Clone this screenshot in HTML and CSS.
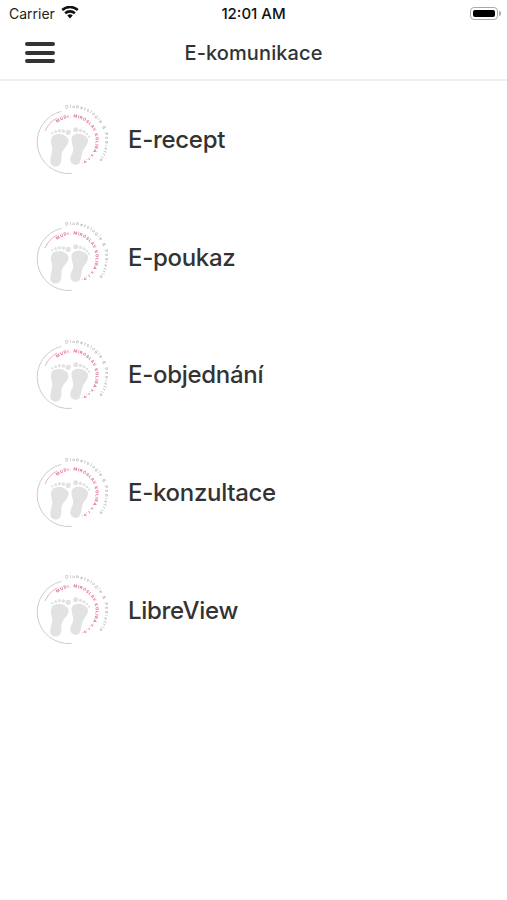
FILE: index.html
```html
<!DOCTYPE html>
<html lang="cs">
  <head>
    <meta charset="UTF-8" />
    <meta name="viewport" content="width=device-width, initial-scale=1.0" />
    <title>E-komunikace</title>
    <link rel="stylesheet" href="styles.css">
  </head>

  <body>
    <svg class="defs" width="0" height="0">
      <defs>
        <path id="ring-outer" d="M 29.6 4.7 A 33 33 0 1 1 30.8 69.5" />
        <path id="ring-inner" d="M 21 19 A 23.5 23.5 0 1 1 28 59" />
      </defs>
      <symbol id="logo-base" viewBox="0 0 72 72">
        <path class="logo-arc" d="M 25.4 7.4 A 31.5 31.5 0 0 0 35.7 69.4" />
        <path class="logo-arc-pink" d="M 9 27 A 27 27 0 0 1 21 14" />
        <g transform="translate(23 43) rotate(10)">
          <path class="logo-foot" d="M-8-10C-4-14 5-14 8-9 10-4 5 0 4 5 3 9 6 12 4 17 2 21-5 21-6 16-7 10-5 6-7 1-9-3-10-7-8-10z" />
          <circle class="logo-foot" cx="6.5" cy="-16" r="2.6" />
          <circle class="logo-foot" cx="1.5" cy="-16.5" r="1.8" />
          <circle class="logo-foot" cx="-2.5" cy="-16" r="1.6" />
          <circle class="logo-foot" cx="-6" cy="-14.5" r="1.4" />
          <circle class="logo-foot" cx="-9" cy="-12.5" r="1.2" />
        </g>
        <g transform="translate(42 42) rotate(14) scale(-0.95 0.95)">
          <path class="logo-foot" d="M-8-10C-4-14 5-14 8-9 10-4 5 0 4 5 3 9 6 12 4 17 2 21-5 21-6 16-7 10-5 6-7 1-9-3-10-7-8-10z" />
          <circle class="logo-foot" cx="6.5" cy="-16" r="2.6" />
          <circle class="logo-foot" cx="1.5" cy="-16.5" r="1.8" />
          <circle class="logo-foot" cx="-2.5" cy="-16" r="1.6" />
          <circle class="logo-foot" cx="-6" cy="-14.5" r="1.4" />
          <circle class="logo-foot" cx="-9" cy="-12.5" r="1.2" />
        </g>
      </symbol>
    </svg>

    <div class="statusbar">
      <div class="status-left">
        <span>Carrier</span>
        <svg class="wifi" viewBox="0 0 20 15" width="18" height="13">
          <path d="M10 14.5 6.8 11a4.6 4.6 0 0 1 6.4 0z" />
          <path d="M5.4 9.5 3.4 7.3a9.6 9.6 0 0 1 13.2 0l-2 2.2a6.7 6.7 0 0 0-9.2 0z" />
          <path d="M2 5.8 0 3.6a14.6 14.6 0 0 1 20 0l-2 2.2a11.7 11.7 0 0 0-16 0z" />
        </svg>
      </div>
      <span class="status-time">12:01 AM</span>
      <div class="battery">
        <div class="battery-body"><div class="battery-level"></div></div>
        <div class="battery-tip"></div>
      </div>
    </div>

    <header class="navbar">
      <button class="menu-btn" aria-label="Menu">
        <span></span>
        <span></span>
        <span></span>
      </button>
      <h1>E-komunikace</h1>
    </header>

    <ul class="list">
      <li class="item">
        <svg class="logo" viewBox="0 0 72 72">
          <use href="#logo-base" width="72" height="72" />
          <text class="logo-outer"><textPath href="#ring-outer">Diabetologie &amp; Podiatrie</textPath></text>
          <text class="logo-inner"><textPath href="#ring-inner">MUDr. MIROSLAV KOLIBA s.r.o.</textPath></text>
        </svg>
        <span>E-recept</span>
      </li>
      <li class="item">
        <svg class="logo" viewBox="0 0 72 72">
          <use href="#logo-base" width="72" height="72" />
          <text class="logo-outer"><textPath href="#ring-outer">Diabetologie &amp; Podiatrie</textPath></text>
          <text class="logo-inner"><textPath href="#ring-inner">MUDr. MIROSLAV KOLIBA s.r.o.</textPath></text>
        </svg>
        <span>E-poukaz</span>
      </li>
      <li class="item">
        <svg class="logo" viewBox="0 0 72 72">
          <use href="#logo-base" width="72" height="72" />
          <text class="logo-outer"><textPath href="#ring-outer">Diabetologie &amp; Podiatrie</textPath></text>
          <text class="logo-inner"><textPath href="#ring-inner">MUDr. MIROSLAV KOLIBA s.r.o.</textPath></text>
        </svg>
        <span>E-objednání</span>
      </li>
      <li class="item">
        <svg class="logo" viewBox="0 0 72 72">
          <use href="#logo-base" width="72" height="72" />
          <text class="logo-outer"><textPath href="#ring-outer">Diabetologie &amp; Podiatrie</textPath></text>
          <text class="logo-inner"><textPath href="#ring-inner">MUDr. MIROSLAV KOLIBA s.r.o.</textPath></text>
        </svg>
        <span>E-konzultace</span>
      </li>
      <li class="item">
        <svg class="logo" viewBox="0 0 72 72">
          <use href="#logo-base" width="72" height="72" />
          <text class="logo-outer"><textPath href="#ring-outer">Diabetologie &amp; Podiatrie</textPath></text>
          <text class="logo-inner"><textPath href="#ring-inner">MUDr. MIROSLAV KOLIBA s.r.o.</textPath></text>
        </svg>
        <span>LibreView</span>
      </li>
    </ul>
  </body>
</html>
```

FILE: styles.css
```css
* {
  margin: 0;
  padding: 0;
  box-sizing: border-box;
}

body {
  width: 507px;
  height: 900px;
  overflow: hidden;
  background-color: #fff;
  color: #333;
  font-family: Inter, "Liberation Sans", sans-serif;
}

.defs {
  display: block;
  height: 0;
}

.statusbar {
  height: 27px;
  display: grid;
  grid-template-columns: 1fr auto 1fr;
  align-items: center;
  padding: 0 9px;
  font-size: 14px;
  color: #222;
}

.status-left {
  display: flex;
  align-items: center;
  gap: 6px;
}

.wifi {
  fill: #111;
  margin-top: -3px;
}

.status-time {
  font-size: 15px;
  font-weight: 500;
  color: #111;
}

.battery {
  justify-self: end;
  margin-right: -3px;
  display: flex;
  align-items: center;
  gap: 1px;
}

.battery-body {
  width: 28px;
  height: 13px;
  padding: 2px;
  border: 1px solid #aaa;
  border-radius: 4px;
}

.battery-level {
  height: 100%;
  background-color: #000;
  border-radius: 2px;
}

.battery-tip {
  width: 2px;
  height: 5px;
  background-color: #aaa;
  border-radius: 0 2px 2px 0;
}

.navbar {
  position: relative;
  height: 54px;
  display: flex;
  align-items: center;
  justify-content: center;
  border-bottom: 2px solid #efefef;
}

.navbar h1 {
  font-size: 20px;
  font-weight: 500;
  letter-spacing: 0.1px;
  color: #333;
}

.menu-btn {
  position: absolute;
  left: 25px;
  top: 15px;
  width: 30px;
  display: flex;
  flex-direction: column;
  gap: 4.5px;
  border: none;
  background: none;
}

.menu-btn span {
  height: 4px;
  background-color: #333;
  border-radius: 2px;
}

.list {
  list-style: none;
  padding-left: 36px;
}

.item {
  height: 117.6px;
  display: flex;
  align-items: center;
  gap: 20px;
  font-size: 24px;
  font-weight: 500;
  letter-spacing: -0.3px;
  color: #333;
}

.logo {
  width: 72px;
  height: 72px;
  flex-shrink: 0;
  filter: blur(0.3px);
}

.logo-arc {
  fill: none;
  stroke: #ccc;
  stroke-width: 1;
}

.logo-arc-pink {
  fill: none;
  stroke: #eab0bd;
  stroke-width: 1;
}

.logo-foot {
  fill: #e2e2e2;
}

.logo-outer {
  font-size: 4.4px;
  letter-spacing: 1.25px;
  fill: #aaa;
}

.logo-inner {
  font-size: 4.2px;
  font-weight: 700;
  letter-spacing: 0.6px;
  fill: #e0708a;
}
```
